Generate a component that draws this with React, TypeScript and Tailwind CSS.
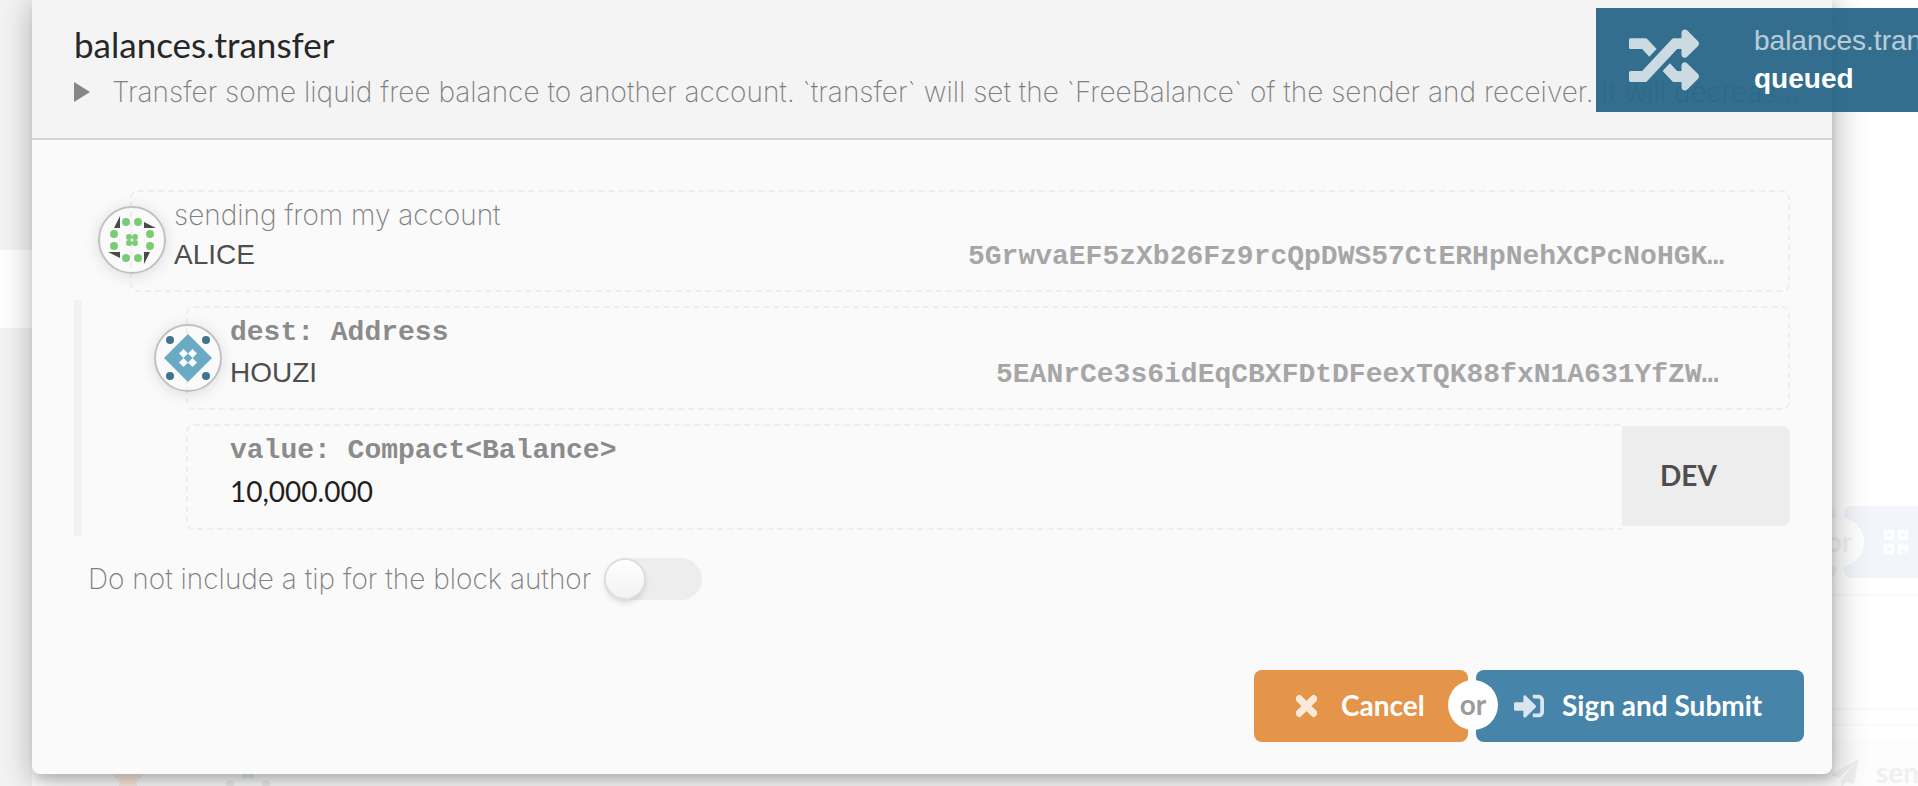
import type { ReactNode } from "react";
import { FaPaperPlane, FaQrcode, FaRandom, FaSignInAlt, FaStar, FaTimes } from "react-icons/fa";

const ALICE = "5GrwvaEF5zXb26Fz9rcQpDWS57CtERHpNehXCPcNoHGK…";
const HOUZI = "5EANrCe3s6idEqCBXFDtDFeexTQK88fxN1A631YfZW…";
const thin = "font-['Inter',sans-serif] font-extralight text-[#808080]";
const mono = "font-['Liberation_Mono',monospace] font-bold";

function Badge({ children }: { children: ReactNode }) {
  return (
    <span className="absolute bottom-4 -left-[34px] size-[68px] rounded-full border-2 border-[#c1c1c1] shadow-[0_2px_16px_rgba(0,0,0,0.12)]">
      <svg viewBox="0 0 64 64" className="size-full" aria-hidden="true">
        {children}
      </svg>
    </span>
  );
}

function AliceIcon() {
  const dots = [[26, 14], [38, 14], [14, 26], [50, 26], [14, 38], [50, 38], [26, 50], [38, 50]];
  return (
    <Badge>
      <g fill="#7ecb76">
        {dots.map(([x, y]) => <circle key={`${x}-${y}`} cx={x} cy={y} r="4" />)}
        <circle cx="29" cy="29" r="3" />
        <circle cx="35" cy="29" r="3" />
        <circle cx="29" cy="35" r="3" />
        <circle cx="35" cy="35" r="3" />
      </g>
      <path fill="#4a4a4a" d="M20 8v12h-6zM44 14l12 6H44zM44 44h6l-6 12zM8 44h12v6z" />
    </Badge>
  );
}

function HouziIcon() {
  return (
    <Badge>
      <path fill="#6baac5" d="M32 8l24 24-24 24L8 32z" />
      <path fill="#fafafa" d="M27.500 23l4.500 4.500-4.500 4.500-4.500-4.500zM36.500 23l4.500 4.500-4.500 4.500-4.500-4.500zM27.500 32l4.500 4.500-4.500 4.500-4.500-4.500zM36.500 32l4.500 4.500-4.500 4.500-4.500-4.500z" />
      <g fill="#40748d">
        <circle cx="14" cy="14" r="4" />
        <circle cx="50" cy="14" r="4" />
        <circle cx="14" cy="50" r="4" />
        <circle cx="50" cy="50" r="4" />
      </g>
    </Badge>
  );
}

type AccountProps = { label: ReactNode; name: string; address: string; icon: ReactNode; height: string; addressWidth: string };

function Account({ label, name, address, icon, height, addressWidth }: AccountProps) {
  return (
    <div className={`relative flex flex-col justify-end rounded-lg border-2 border-dashed border-[#eeeeee] pr-[54px] pb-[13px] pl-[42px] ${height}`}>
      {icon}
      <div className="leading-10">{label}</div>
      <div className="flex items-baseline justify-between leading-10">
        <span className="font-['Liberation_Sans',sans-serif] text-[#4e4e4e]">{name}</span>
        <span className={`${mono} ${addressWidth} text-[#a6a6a6]`}>{address}</span>
      </div>
    </div>
  );
}

/** The dimmed page that shows around the dialog's edges. */
function Backdrop() {
  return (
    <div className="absolute inset-0 flex justify-between overflow-hidden" aria-hidden="true">
      <div className="w-8 bg-[#f3f3f3] pt-[250px]">
        <div className="h-[78px] bg-white" />
      </div>
      <div className="flex flex-1 items-end gap-20 pl-20">
        <FaStar className="-mb-2 size-8 text-[#fdf1e7]" />
        <svg viewBox="0 0 48 12" className="h-3 w-12">
          <g fill="#e6f3e5">
            <circle cx="21" cy="2" r="3" />
            <circle cx="27" cy="2" r="3" />
          </g>
          <g fill="#efefef">
            <circle cx="6" cy="10" r="4" />
            <circle cx="42" cy="10" r="4" />
          </g>
        </svg>
      </div>
      <div className="flex w-[104px] flex-col overflow-hidden pt-[506px]">
        <div className="relative flex h-[72px] gap-2">
          <div className="w-[22px] shrink-0 rounded-r-lg bg-[#f2f6fa]" />
          <div className="flex w-[160px] shrink-0 items-center rounded-lg bg-[#f2f6fa] pl-[38px]">
            <FaQrcode className="size-7 text-white" />
          </div>
          <span className="absolute top-[11px] left-0 flex size-[50px] items-center justify-center rounded-full bg-white pb-0.5 font-bold text-[#f3f3f3]">or</span>
        </div>
        <div className="mt-4 h-[116px] border-y-2 border-[#fafafa]" />
        <div className="mt-3.5 h-[18px] border-y-2 border-[#fcfcfc]" />
        <div className="flex flex-1 items-end gap-[18px] bg-[#fdfdfd] pl-[18px] leading-7 font-bold text-[#f0f0f0]">
          <FaPaperPlane className="size-[26px] shrink-0" />send
        </div>
      </div>
    </div>
  );
}

export default function App() {
  return (
    <div className="relative h-screen overflow-hidden bg-white font-['Lato',sans-serif] text-[28px]">
      <Backdrop />
      <main className="relative mr-[86px] ml-8 flex h-[774px] flex-col rounded-b-lg bg-[#fafafa] shadow-[2px_6px_6px_0_rgba(0,0,0,0.1),2px_6px_30px_4px_rgba(0,0,0,0.25)]">
        <header className="h-[140px] border-b-2 border-[#d4d4d5] bg-[#f4f4f4] px-[42px] pt-[22px]">
          <h1 className="text-[35px] leading-[44px] text-[#272727]">balances.transfer</h1>
          <div className={`flex items-center gap-[22px] leading-[52px] ${thin}`}>
            <svg viewBox="0 0 16 20" className="h-5 w-4 shrink-0" fill="#878787" aria-hidden="true"><path d="M0 0l16 10L0 20z" /></svg>
            <p className="whitespace-nowrap">Transfer some liquid free balance to another account. `transfer` will set the `FreeBalance` of the sender and receiver. It will decreas…</p>
          </div>
        </header>
        <section className="px-[42px] pt-[50px]">
          <div className="ml-14">
            <Account height="h-[102px]" addressWidth="w-[766px]" label={<span className={thin}>sending from my account</span>} name="ALICE" address={ALICE} icon={<AliceIcon />} />
          </div>
          <div className="mt-2 border-l-8 border-[#f2f2f2] py-1.5 pl-[104px]">
            <Account height="h-[104px]" addressWidth="w-[738px]" label={<span className={`${mono} text-[#8b8b8b]`}>dest: Address</span>} name="HOUZI" address={HOUZI} icon={<HouziIcon />} />
            <div className="mt-3.5 flex h-[106px] rounded-lg">
              <label className="flex-1 rounded-l-lg border-2 border-r-0 border-dashed border-[#eeeeee] pl-[42px]">
                <span className={`${mono} block leading-[50px] text-[#8b8b8b]`}>value: Compact&lt;Balance&gt;</span>
                <input readOnly defaultValue="10,000.000" className="block h-[30px] w-full bg-transparent leading-[30px] text-[#1f1f1f] outline-none" />
              </label>
              <div className="my-0.5 flex h-[100px] w-[168px] items-center rounded-r-lg bg-[#ededed] pb-0.5 pl-[38px] font-bold text-[#4e4e4e]">DEV</div>
            </div>
          </div>
          <label className="mt-[22px] flex items-center gap-[13px] pl-3.5">
            <span className={thin}>Do not include a tip for the block author</span>
            <input type="checkbox" className="h-[42px] w-[98px] appearance-none rounded-full bg-[#ededed] before:block before:size-[42px] before:rounded-full before:border-2 before:border-[#dedede] before:bg-linear-to-b before:from-white before:to-[#f2f2f2] before:shadow-md" />
          </label>
        </section>
        <footer className="mt-auto mb-8 flex justify-end gap-1 pr-7 font-bold text-white">
          <button className="flex h-[72px] w-[214px] items-center gap-6 rounded-lg bg-[#e4954a] pl-[42px]">
            <FaTimes viewBox="0 0 352 512" strokeWidth="28" className="h-[30px] w-[21px] opacity-80" />
            <span className="pb-0.5">Cancel</span>
          </button>
          <span className="relative w-0">
            <span className="absolute top-[10px] -left-6 flex size-[50px] items-center justify-center rounded-full bg-white pb-0.5 text-[#9b9b9b]">or</span>
          </span>
          <button className="flex h-[72px] w-[328px] items-center gap-[18px] rounded-lg bg-[#4685a9] pl-[38px]">
            <FaSignInAlt className="size-[30px] opacity-80" />
            <span className="pb-0.5">Sign and Submit</span>
          </button>
        </footer>
      </main>
      <aside className="absolute top-2 right-0 flex h-[104px] w-[322px] items-center overflow-hidden bg-[#276587]/94 pl-[33px]">
        <FaRandom className="size-[70px] shrink-0 text-white opacity-75" />
        <div className="ml-[55px] font-['Liberation_Sans',sans-serif] leading-[38px] whitespace-nowrap text-white">
          <div className="text-white/65">balances.transfer</div>
          <div className="font-bold">queued</div>
        </div>
      </aside>
    </div>
  );
}
